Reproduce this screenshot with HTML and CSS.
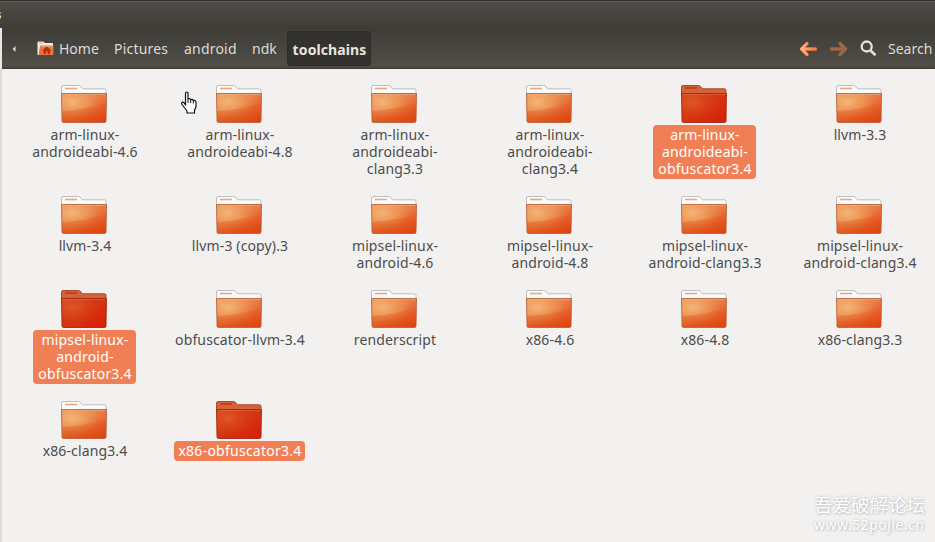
FILE: index.html
```html
<!DOCTYPE html>
<html lang="en">
<head>
<meta charset="utf-8">
<title>toolchains</title>
<link rel="stylesheet" href="styles.css">
</head>
<body>
<svg class="defs" width="0" height="0" aria-hidden="true">
  <defs>
    <linearGradient id="front" x1="0" y1="0" x2="1" y2="1"><stop offset="0" stop-color="#eb965a"/><stop offset=".45" stop-color="#e98248"/><stop offset=".75" stop-color="#e75d28"/><stop offset="1" stop-color="#e2410c"/></linearGradient>
    <radialGradient id="glow" cx=".25" cy=".3" r=".6"><stop offset="0" stop-color="#f5c486" stop-opacity=".75"/><stop offset="1" stop-color="#f5a860" stop-opacity="0"/></radialGradient>
    <linearGradient id="shade" x1="0" y1="0" x2="0" y2="1"><stop offset="0" stop-color="#dc5318" stop-opacity=".1"/><stop offset="1" stop-color="#d9430c" stop-opacity=".6"/></linearGradient>
    <linearGradient id="redfront" x1="0" y1="0" x2="1" y2="1"><stop offset="0" stop-color="#d1451b"/><stop offset=".5" stop-color="#d43412"/><stop offset="1" stop-color="#d81e04"/></linearGradient>
    <radialGradient id="redglow" cx=".25" cy=".3" r=".6"><stop offset="0" stop-color="#e4622e" stop-opacity=".7"/><stop offset="1" stop-color="#e04818" stop-opacity="0"/></radialGradient>
    <symbol id="folder" viewBox="0 0 48 40">
      <path d="M1.500 12V3q0-1.500 1.500-1.500h15.500q1.500 0 2.500 1.500l1.500 1.800h22q1.500 0 1.500 1.500V12z" fill="#fbfbfa" stroke="#bdbdc0"/>
      <path d="M5 4.500h12" stroke="#eaa77f" stroke-width="1.600"/>
      <path d="M1.500 9.500h45v1L46 37q0 1.500-1.500 1.500h-41Q2 38.500 2 37z" fill="url(#front)"/>
      <path d="M1.500 9.500h45L46 37q0 1.500-1.500 1.500h-41Q2 38.500 2 37z" fill="url(#glow)"/>
      <path d="M2 27q24-1 44.500-9L46 38H2z" fill="url(#shade)"/>
      <path d="M1.500 9.500h45L46 37q0 1.500-1.500 1.500h-41Q2 38.500 2 37z" fill="none" stroke="#b35a35" stroke-opacity=".8"/>
      <path d="M2.500 10.500h43" stroke="#f2b183" stroke-opacity=".5"/>
    </symbol>
    <symbol id="red" viewBox="0 0 48 40">
      <path d="M1.500 12V3q0-1.500 1.500-1.500h15.500q1.500 0 2.500 1.500l1.500 1.800h22q1.500 0 1.500 1.500V12z" fill="#d4623a" stroke="#a94a2a"/>
      <path d="M5 4h12" stroke="#b93b17" stroke-width="1.500"/>
      <path d="M1.500 9.500h45L46 37q0 1.500-1.500 1.500h-41Q2 38.500 2 37z" fill="url(#redfront)"/>
      <path d="M1.500 9.500h45L46 37q0 1.500-1.500 1.500h-41Q2 38.500 2 37z" fill="url(#redglow)"/>
      <path d="M1.500 9.500h45L46 37q0 1.500-1.500 1.500h-41Q2 38.500 2 37z" fill="none" stroke="#9c2609" stroke-opacity=".85"/>
      <path d="M2.500 10.500h43" stroke="#e8764c" stroke-opacity=".5"/>
    </symbol>
    <linearGradient id="arrow" x1="0" y1="0" x2="1" y2="0"><stop offset="0" stop-color="#ffb27d"/><stop offset="1" stop-color="#ee7a42"/></linearGradient>
  </defs>
</svg>
<div class="window">
  <header class="titlebar"><span class="title">s</span></header>
  <nav class="toolbar">
    <svg class="back" width="4" height="6" viewBox="0 0 4 6"><path d="M3.500 0v6L.5 3z" fill="#dfdbd2"/></svg>
    <svg class="home" width="17" height="15" viewBox="0 0 17 15"><path d="M.5 14V1.500q0-1 1-1H6L8 2h7q1 0 1 1v3H3v8z" fill="#f3eee8"/><path d="M2 2h4" stroke="#e79a70"/><path d="M3 4.500h13.500V13q0 1-1 1H1.500z" fill="#e8743f"/><path d="M3.500 5h12.500" stroke="#f3b58b"/><path d="M9.700 5.500l4.800 4H13V13h-2.300v-2.500H8.800V13H6.500V9.500H5z" fill="#b72f0d"/></svg>
    <span class="crumb c-home">Home</span>
    <span class="crumb c-pictures">Pictures</span>
    <span class="crumb c-android">android</span>
    <span class="crumb c-ndk">ndk</span>
    <span class="current"><b>toolchains</b></span>
    <span class="tools">
      <svg width="19" height="16" viewBox="0 0 19 16"><path d="M16.500 8H3M8 2.500L2.500 8 8 13.500" fill="none" stroke="#b9592c" stroke-width="3.600" stroke-linecap="round" stroke-linejoin="round"/><path d="M16.500 8H3v-.01M8 2.500L2.500 8 8 13.500" fill="none" stroke="url(#arrow)" stroke-width="2.800" stroke-linecap="round" stroke-linejoin="round"/></svg>
      <svg class="forward" width="19" height="16" viewBox="0 0 19 16"><path d="M2.500 8H16M11 2.500L16.500 8 11 13.500" fill="none" stroke="#9c6848" stroke-width="3.300" stroke-linecap="round" stroke-linejoin="round"/></svg>
      <svg class="lens" width="17" height="17" viewBox="0 0 17 17"><circle cx="6.700" cy="6.500" r="5" fill="none" stroke="#e4e1da" stroke-width="2.300"/><path d="M10.500 10.500l5 4.800" stroke="#e4e1da" stroke-width="2.600"/></svg>
      <span class="search">Search</span>
    </span>
  </nav>
  <main class="content">
    <div class="item"><svg class="icon"><use href="#folder"/></svg><p>arm-linux-<br>androideabi-4.6</p></div>
    <div class="item"><svg class="icon"><use href="#folder"/></svg><p>arm-linux-<br>androideabi-4.8</p></div>
    <div class="item"><svg class="icon"><use href="#folder"/></svg><p>arm-linux-<br>androideabi-<br>clang3.3</p></div>
    <div class="item"><svg class="icon"><use href="#folder"/></svg><p>arm-linux-<br>androideabi-<br>clang3.4</p></div>
    <div class="item selected"><svg class="icon"><use href="#red"/></svg><p>arm-linux-<br>androideabi-<br>obfuscator3.4</p></div>
    <div class="item"><svg class="icon"><use href="#folder"/></svg><p>llvm-3.3</p></div>
    <div class="item"><svg class="icon"><use href="#folder"/></svg><p>llvm-3.4</p></div>
    <div class="item"><svg class="icon"><use href="#folder"/></svg><p>llvm-3 (copy).3</p></div>
    <div class="item"><svg class="icon"><use href="#folder"/></svg><p>mipsel-linux-<br>android-4.6</p></div>
    <div class="item"><svg class="icon"><use href="#folder"/></svg><p>mipsel-linux-<br>android-4.8</p></div>
    <div class="item"><svg class="icon"><use href="#folder"/></svg><p>mipsel-linux-<br>android-clang3.3</p></div>
    <div class="item"><svg class="icon"><use href="#folder"/></svg><p>mipsel-linux-<br>android-clang3.4</p></div>
    <div class="item selected"><svg class="icon"><use href="#red"/></svg><p>mipsel-linux-<br>android-<br>obfuscator3.4</p></div>
    <div class="item"><svg class="icon"><use href="#folder"/></svg><p>obfuscator-llvm-3.4</p></div>
    <div class="item"><svg class="icon"><use href="#folder"/></svg><p>renderscript</p></div>
    <div class="item"><svg class="icon"><use href="#folder"/></svg><p>x86-4.6</p></div>
    <div class="item"><svg class="icon"><use href="#folder"/></svg><p>x86-4.8</p></div>
    <div class="item"><svg class="icon"><use href="#folder"/></svg><p>x86-clang3.3</p></div>
    <div class="item"><svg class="icon"><use href="#folder"/></svg><p>x86-clang3.4</p></div>
    <div class="item selected wide"><svg class="icon"><use href="#red"/></svg><p>x86-obfuscator3.4</p></div>
  </main>
  <svg class="cursor" width="18" height="24" viewBox="0 0 18 24"><path d="M5.500 14V2.500q0-1.500 1.300-1.500T8 2.500V8q2-1 2.700.7 2-.7 2.600.8 2.700-.5 2.700 2V16l-1.500 3v3H7v-2l-5-6.500q-1-2 .8-2.300 1.200 0 2.700 2.800z" fill="#fff" stroke="#111" stroke-width="1.200" stroke-linejoin="round"/><path d="M8 8v4M10.700 9v3M13.300 10v2.500" stroke="#111" stroke-width="1"/></svg>
  <aside class="watermark"><div class="forum" lang="zh">吾爱破解论坛</div><div class="site">www.52pojie.cn</div></aside>
</div>
</body>
</html>
```
FILE: styles.css
```css
* { box-sizing: border-box; }
body { margin: 0; overflow: hidden; font-family: "Noto Sans", sans-serif; font-size: 14px; color: #4c4c4c; }
.defs { position: absolute; }
.window { position: relative; width: 935px; height: 542px; background: #f2f1f0; display: flex; flex-direction: column; }
.titlebar { height: 28px; flex: none; background: linear-gradient(#302f2b 0 1px, #5f5d55 1px 2px, #4e4c46 2px, #3e3d38 28px); overflow: hidden; }
.title { display: block; margin: 4px 0 0 -5px; line-height: 20px; font-weight: bold; font-size: 13px; color: #dfdbd2; }
.toolbar { height: 41px; flex: none; display: flex; align-items: center; background: linear-gradient(#3d3c37, #504e47 38px, #45433d 40px, #3b3934); color: #dfdbd2; border-left: 2px solid #e9e8e6; padding-left: 10px; }
.toolbar svg { flex: none; }
.home { margin-left: 21px; }
.crumb, .search { white-space: nowrap; line-height: 20px; flex: none; }
.c-home { width: 55px; margin-left: 5px; }
.c-pictures { width: 70px; letter-spacing: .2px; }
.c-android { width: 68px; letter-spacing: .2px; }
.c-ndk { width: 35px; }
.current { width: 84px; height: 35px; flex: none; background: #33322e; border: 1px solid #2c2b27; border-radius: 3px; display: flex; align-items: center; justify-content: center; color: #e9e6df; padding: 2px 0 0 1px; letter-spacing: .1px; }
.tools { margin-left: auto; width: 136px; flex: none; display: flex; align-items: center; }
.forward { margin-left: 11px; }
.lens { margin-left: 12px; }
.search { margin-left: 11px; }
.content { flex: 1; display: grid; grid-template-columns: repeat(6, 155px); grid-template-rows: 111px 94px 111px 90px; padding: 15px 0 0 5px; border-left: 2px solid #dedddb; }
.item { display: flex; flex-direction: column; align-items: center; }
.icon { width: 48px; height: 40px; flex: none; margin-right: 1px; }
.item p { margin: 1px 0 0; padding: 1px 0 2px 1px; line-height: 17px; text-align: center; white-space: nowrap; border-radius: 4px; letter-spacing: .13px; }
.selected p { background: #f07f56; color: #fff; width: 103px; letter-spacing: .2px; }
.selected.wide p { width: 131px; letter-spacing: .25px; }
.cursor { position: absolute; left: 180px; top: 91px; }
.watermark { position: absolute; left: 814px; top: 492px; color: #fff; text-shadow: 0 0 3px #bbb, 1px 1px 2px #ccc; white-space: nowrap; }
.forum { font: 18.500px/24px "Noto Sans CJK SC", sans-serif; }
.site { font-size: 14px; line-height: 17px; letter-spacing: .5px; }
```
